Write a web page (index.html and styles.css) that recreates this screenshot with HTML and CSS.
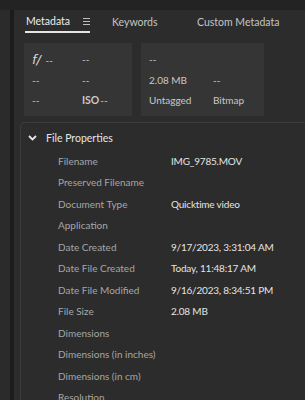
FILE: index.html
```html
<!DOCTYPE html>
<html lang="en">
<head>
    <meta charset="UTF-8">
    <title>Metadata</title>
    <link rel="stylesheet" href="styles.css">
</head>
<body>
    <div class="topbar"></div>
    <div class="layout">
        <div class="sidebar"></div>
        <div class="divider"></div>
        <div class="main">
            <div class="tabs">
                <div class="tab active">
                    <span>Metadata</span>
                    <svg class="menu-icon" width="7" height="7" viewBox="0 0 7 7">
                        <rect x="0" y="0" width="7" height="1" fill="#bdbdbd"/>
                        <rect x="0" y="3" width="7" height="1" fill="#bdbdbd"/>
                        <rect x="0" y="6" width="7" height="1" fill="#bdbdbd"/>
                    </svg>
                </div>
                <div class="tab tab-keywords">Keywords</div>
                <div class="tab">Custom Metadata</div>
            </div>

            <div class="cards">
                <div class="card card-camera">
                    <div><span class="fstop">f/</span> --</div>
                    <div>--</div>
                    <div>--</div>
                    <div>--</div>
                    <div>--</div>
                    <div><span class="iso">ISO</span>--</div>
                </div>
                <div class="card card-file">
                    <div>--</div>
                    <div></div>
                    <div>2.08 MB</div>
                    <div>--</div>
                    <div>Untagged</div>
                    <div>Bitmap</div>
                </div>
            </div>

            <div class="panel">
                <div class="panel-head">
                    <svg class="chevron" width="9" height="6" viewBox="0 0 9 6">
                        <path d="M1 1 L4.5 4.5 L8 1" stroke="#e6e6e6" stroke-width="1.8" fill="none"/>
                    </svg>
                    <span>File Properties</span>
                </div>
                <div class="props">
                    <div class="prop"><span class="key">Filename</span><span class="val">IMG_9785.MOV</span></div>
                    <div class="prop"><span class="key">Preserved Filename</span><span class="val"></span></div>
                    <div class="prop"><span class="key">Document Type</span><span class="val">Quicktime video</span></div>
                    <div class="prop"><span class="key">Application</span><span class="val"></span></div>
                    <div class="prop"><span class="key">Date Created</span><span class="val">9/17/2023, 3:31:04 AM</span></div>
                    <div class="prop"><span class="key">Date File Created</span><span class="val">Today, 11:48:17 AM</span></div>
                    <div class="prop"><span class="key">Date File Modified</span><span class="val">9/16/2023, 8:34:51 PM</span></div>
                    <div class="prop"><span class="key">File Size</span><span class="val">2.08 MB</span></div>
                    <div class="prop"><span class="key">Dimensions</span><span class="val"></span></div>
                    <div class="prop"><span class="key">Dimensions (in inches)</span><span class="val"></span></div>
                    <div class="prop"><span class="key">Dimensions (in cm)</span><span class="val"></span></div>
                    <div class="prop"><span class="key">Resolution</span><span class="val"></span></div>
                </div>
            </div>
        </div>
    </div>
</body>
</html>
```

FILE: styles.css
```css
body {
    margin: 0;
    width: 305px;
    height: 400px;
    overflow: hidden;
    background: #2c2c2c;
    font-family: 'Lato', 'Open Sans', sans-serif;
    font-size: 10px;
    color: #d8d8d8;
}

.topbar {
    height: 10px;
    background: #232323;
}

.layout {
    display: flex;
    height: 390px;
}

.sidebar {
    width: 10px;
    background: #2b2b2b;
}

.divider {
    width: 4px;
    background: #1c1c1c;
}

.main {
    flex: 1;
    padding-left: 6px;
    background: #2c2c2c;
}

/* tabs */
.tabs {
    display: flex;
    height: 24px;
    padding-left: 5px;
    white-space: nowrap;
}

.tab {
    display: flex;
    align-items: center;
    height: 22px;
    color: #c4c4c4;
    font-size: 10.5px;
    padding-top: 1px;
}

.tab.active {
    width: 64px;
    color: #ececec;
    border-bottom: 2px solid #e4e4e4;
    padding-left: 1px;
    margin-right: 22px;
    height: 20px;
}

.tab-keywords {
    width: 85px;
}

.menu-icon {
    margin-left: auto;
}

/* summary cards */
.cards {
    display: flex;
    gap: 9px;
    margin-top: 9px;
    padding-left: 4px;
}

.card {
    display: grid;
    grid-template-rows: repeat(3, 20.5px);
    align-items: center;
    background: #353535;
    height: 73px;
    padding: 6px 0 0 8px;
    box-sizing: border-box;
    color: #c8c8c8;
    font-size: 10px;
}

.card-camera {
    width: 108px;
    grid-template-columns: 50px 1fr;
}

.card-file {
    width: 123px;
    grid-template-columns: 64px 1fr;
}

.fstop {
    font-family: 'DejaVu Sans', sans-serif;
    font-style: italic;
    font-weight: 300;
    font-size: 13px;
    color: #d6d6d6;
    margin-right: 2px;
}

.iso {
    font-weight: 700;
    font-size: 10.5px;
    margin-right: 1px;
}

/* file properties */
.panel {
    margin-top: 6px;
    border: 1px solid #3c3c3c;
    border-right: none;
    border-radius: 5px 0 0 0;
    padding-top: 6px;
}

.panel-head {
    display: flex;
    align-items: center;
    color: #e6e6e6;
    font-size: 10.5px;
    height: 17px;
    padding-left: 7px;
}

.chevron {
    margin-right: 9px;
}

.props {
    padding-left: 37px;
    padding-top: 4px;
}

.prop {
    display: flex;
    height: 21.5px;
    align-items: center;
}

.key {
    width: 113px;
    color: #a6a6a6;
    white-space: nowrap;
}

.val {
    color: #e4e4e4;
    white-space: nowrap;
    letter-spacing: -0.2px;
}
```
